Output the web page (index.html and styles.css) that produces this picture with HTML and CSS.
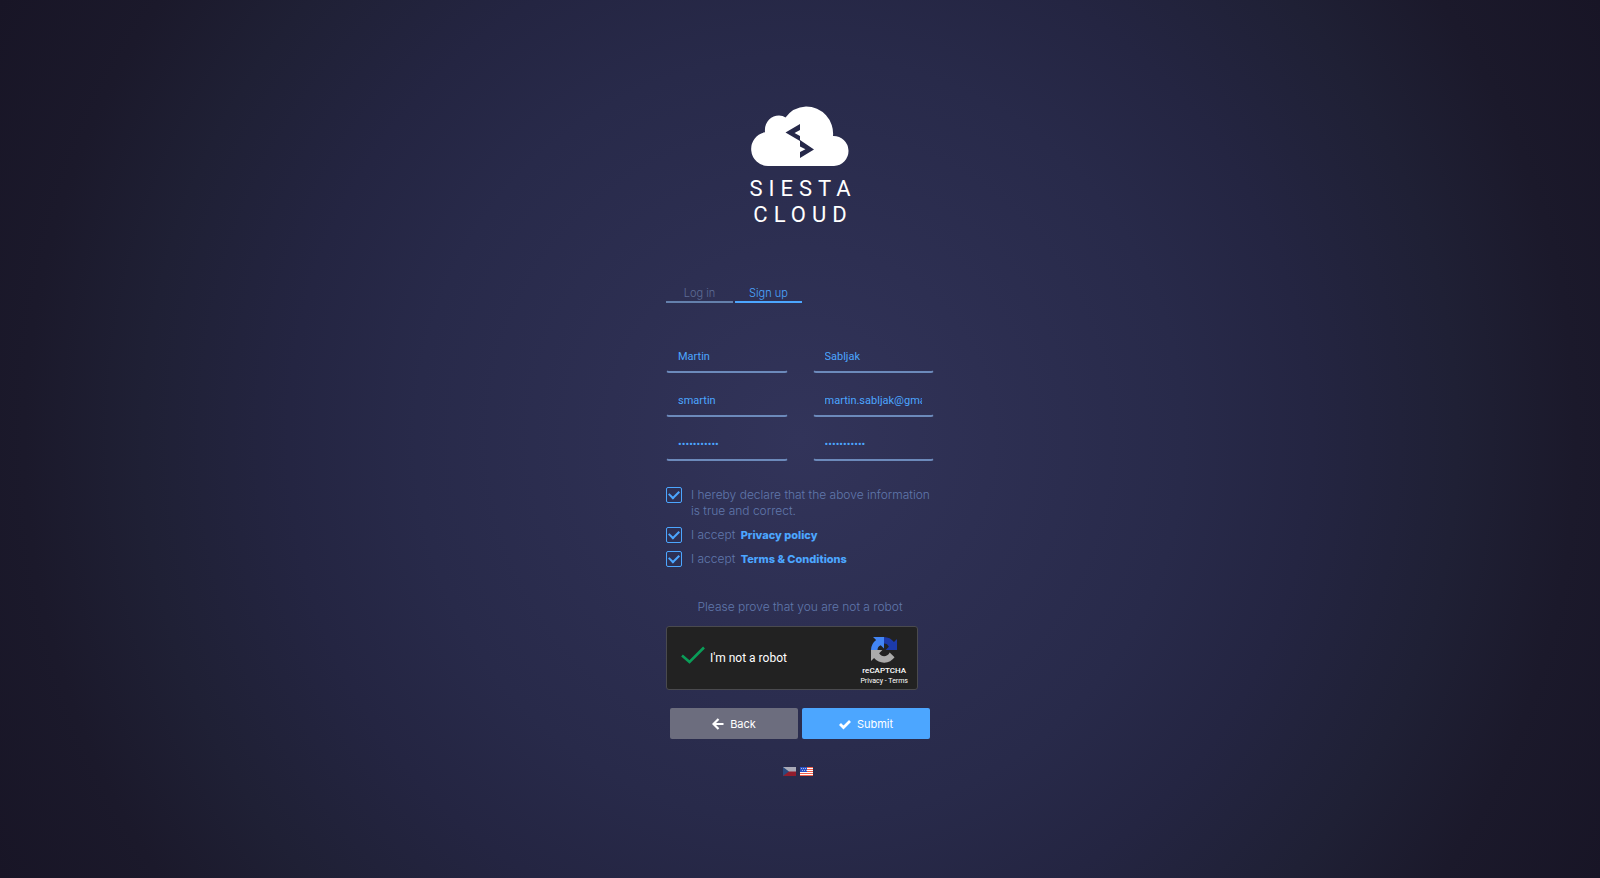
FILE: index.html
```
<!DOCTYPE html>
<html lang="en">
<head>
    <meta charset="UTF-8">
    <meta name="viewport" content="width=device-width, initial-scale=1.0">
    <title>Siesta Cloud - Sign up</title>
    <link rel="stylesheet" href="styles.css">
</head>
<body>
    <header class="logo">
        <svg class="logo-cloud" viewBox="0 0 98 60" aria-hidden="true">
            <path fill="#fff" d="M17 60A17 17 0 0 1 14 26.300C13 16 20 9.500 28 9.500Q32 9.500 34.500 11.500A27 27 0 0 1 55 0.500A27 27 0 0 1 82 30A15 15 0 0 1 83 60Z"/>
            <path fill="#262849" d="M49 18V24L43.500 27L49 30V34L63 43.500L49 52V46L54.500 43.200L49 40.500V35L34.500 26.500Z"/>
        </svg>
        <div class="logo-text">SIESTA</div>
        <div class="logo-text">CLOUD</div>
    </header>

    <main class="signup">
        <nav class="tabs">
            <a href="#login">Log in</a>
            <a href="#signup" class="active">Sign up</a>
        </nav>

        <form id="signup-form">
            <div class="fields">
                <input type="text" aria-label="First name" value="Martin">
                <input type="text" aria-label="Last name" value="Sabljak">
                <input type="text" aria-label="Username" value="smartin">
                <input type="text" aria-label="Email" value="martin.sabljak@gmail.com">
                <input type="password" aria-label="Password" value="password123">
                <input type="password" aria-label="Repeat password" value="password123">
            </div>

            <div class="checks">
                <div class="check">
                    <input type="checkbox" id="declare" checked>
                    <label for="declare">I hereby declare that the above information is true and correct.</label>
                </div>
                <div class="check">
                    <input type="checkbox" id="privacy" checked>
                    <label for="privacy">I accept <a href="#privacy-policy">Privacy policy</a></label>
                </div>
                <div class="check">
                    <input type="checkbox" id="terms" checked>
                    <label for="terms">I accept <a href="#terms-conditions">Terms &amp; Conditions</a></label>
                </div>
            </div>

            <p class="prove">Please prove that you are not a robot</p>

            <div class="captcha">
                <svg class="captcha-tick" viewBox="0 0 24 18" aria-hidden="true">
                    <path fill="none" stroke="#0a9d58" stroke-width="2.600" d="M1 9.500L8.500 16L23 1.500"/>
                </svg>
                <span class="captcha-label">I'm not a robot</span>
                <div class="captcha-brand">
                    <svg class="captcha-logo" viewBox="0 0 64 64" aria-hidden="true">
                        <path fill="#1c3aa9" d="M64 32V5L56.500 12.500A32 32 0 0 0 32 0V16C38 16 42 19 44 24L36 32Z"/>
                        <path fill="#4285f4" d="M32 0H5L12.500 7.500A32 32 0 0 0 0 32H16C16 26 19 22 24 20L32 28Z"/>
                        <path fill="#ababab" d="M0 32V59L7.500 51.500A32 32 0 0 0 58 50L46 38C40 50 26 50 20 40L28 32Z"/>
                    </svg>
                    <span class="captcha-name">reCAPTCHA</span>
                    <span class="captcha-links"><a href="#captcha-privacy">Privacy</a> - <a href="#captcha-terms">Terms</a></span>
                </div>
            </div>

            <div class="buttons">
                <button type="button" class="back">
                    <svg viewBox="0 0 12 12" aria-hidden="true"><path fill="none" stroke="#fff" stroke-width="2.200" d="M11.500 6H2M6.500 1L1.500 6L6.500 11"/></svg>
                    Back
                </button>
                <button type="submit" class="submit">
                    <svg viewBox="0 0 12 12" aria-hidden="true"><path fill="none" stroke="#fff" stroke-width="2.800" d="M1 6L4.500 9.500L11 3"/></svg>
                    Submit
                </button>
            </div>
        </form>

        <div class="languages">
            <a href="#cs" aria-label="Čeština" class="inactive">
                <svg viewBox="0 0 13 9"><path fill="#fff" d="M0 0H13V5H0Z"/><path fill="#d7141a" d="M0 4.500H13V9H0Z"/><path fill="#2c5f9e" d="M0 0L6 4.500L0 9Z"/></svg>
            </a>
            <a href="#en" aria-label="English">
                <svg viewBox="0 0 13 9"><path fill="#fff" d="M0 0H13V9H0Z"/><path fill="#f0604c" d="M0 0H13V1H0ZM0 2H13V3H0ZM0 4H13V5H0ZM0 6H13V7H0ZM0 8H13V9H0Z"/><path fill="#2a51c4" d="M0 0H7V5H0Z"/><path stroke="#fff" stroke-width=".6" stroke-dasharray="1 1" d="M1 1.500H7M2 3.500H7"/></svg>
            </a>
        </div>
    </main>
</body>
</html>
```
FILE: styles.css
```
* {
    box-sizing: border-box;
}
body {
    min-height: 100vh;
    margin: 0;
    padding: 106px 20px 60px;
    font-family: Inter, sans-serif;
    font-size: 11px;
    font-weight: 300;
    line-height: 16px;
    color: #6078ac;
    background: radial-gradient(circle, #32345a 0%, #282a4a 42%, #242542 56%, #1f2035 72%, #1b192b 85%, #181526 100%);
}
a {
    color: #4ca6ff;
    text-decoration: none;
}
.logo {
    display: flex;
    flex-direction: column;
    align-items: center;
    color: #fff;
}
.logo-cloud {
    width: 98px;
    height: 60px;
    margin-bottom: 10px;
}
.logo-text {
    padding-left: 6px;
    font-family: Roboto, sans-serif;
    font-size: 22px;
    font-weight: 400;
    line-height: 26px;
    letter-spacing: 6px;
}
.signup {
    width: 100%;
    max-width: 268px;
    margin: 57px auto 0;
}
.tabs {
    display: flex;
    gap: 2px;
}
.tabs a {
    width: 67px;
    border-bottom: 2px solid #6480ac;
    color: #5d6c96;
    text-align: center;
}
.tabs a.active {
    border-color: #4ca6ff;
    color: #4ca6ff;
}
.fields {
    display: grid;
    grid-template-columns: 1fr 1fr;
    gap: 12px 25px;
    margin-top: 38px;
}
.fields input {
    width: 100%;
    height: 32px;
    padding: 0 11px;
    border: 1px solid transparent;
    border-bottom: 2px solid #6c8abb;
    border-radius: 3px;
    outline: none;
    background: transparent;
    font-family: Roboto, sans-serif;
    font-size: 11px;
    font-weight: 400;
    color: #4ca6ff;
}
.checks {
    display: flex;
    flex-direction: column;
    gap: 8px;
    margin-top: 26px;
    font-size: 12px;
}
.check {
    display: flex;
    gap: 9px;
}
.check input {
    appearance: none;
    flex: none;
    width: 16px;
    height: 16px;
    margin: 0;
    border: 1px solid #4ca6ff;
    border-radius: 2px;
    display: grid;
    place-items: center;
}
.check input:checked::before {
    content: "";
    width: 8px;
    height: 5px;
    margin-bottom: 3px;
    border-left: 2px solid #4ca6ff;
    border-bottom: 2px solid #4ca6ff;
    transform: rotate(-45deg);
}
.check a {
    margin-left: 2px;
    font-size: 11px;
    font-weight: 800;
}
.prove {
    margin: 32px 0 11px;
    font-size: 12px;
    text-align: center;
}
.captcha {
    display: flex;
    align-items: center;
    width: 252px;
    max-width: 100%;
    height: 64px;
    padding: 0 9px 0 14px;
    border: 1px solid #4a4a4e;
    border-radius: 3px;
    background: #222;
    font-family: Roboto, sans-serif;
    color: #fff;
}
.captcha-tick {
    width: 24px;
    height: 18px;
    margin-bottom: 6px;
}
.captcha-label {
    margin-left: 5px;
    font-size: 12px;
    font-weight: 400;
}
.captcha-brand {
    display: flex;
    flex-direction: column;
    align-items: center;
    margin-left: auto;
    padding-top: 5px;
}
.captcha-logo {
    width: 26px;
    height: 26px;
}
.captcha-name {
    margin-top: 2px;
    font-size: 8px;
    font-weight: 500;
    line-height: 12px;
}
.captcha-links {
    font-size: 7px;
    font-weight: 400;
    line-height: 8px;
}
.captcha-links a {
    color: #fff;
}
.buttons {
    display: flex;
    gap: 4px;
    margin-top: 18px;
    padding: 0 4px;
}
.buttons button {
    display: flex;
    flex: 1;
    align-items: center;
    justify-content: center;
    gap: 6px;
    height: 31px;
    border: none;
    border-radius: 2px;
    font-family: Inter, sans-serif;
    font-size: 11px;
    color: #fff;
    cursor: pointer;
}
.buttons svg {
    width: 12px;
    height: 12px;
}
.buttons .back {
    background: #6c6d7e;
}
.buttons .submit {
    background: #4ca6ff;
}
.languages {
    display: flex;
    justify-content: center;
    gap: 4px;
    margin-top: 28px;
    padding-right: 4px;
}
.languages svg {
    display: block;
    width: 13px;
    height: 9px;
}
.languages .inactive {
    opacity: .6;
}
```
